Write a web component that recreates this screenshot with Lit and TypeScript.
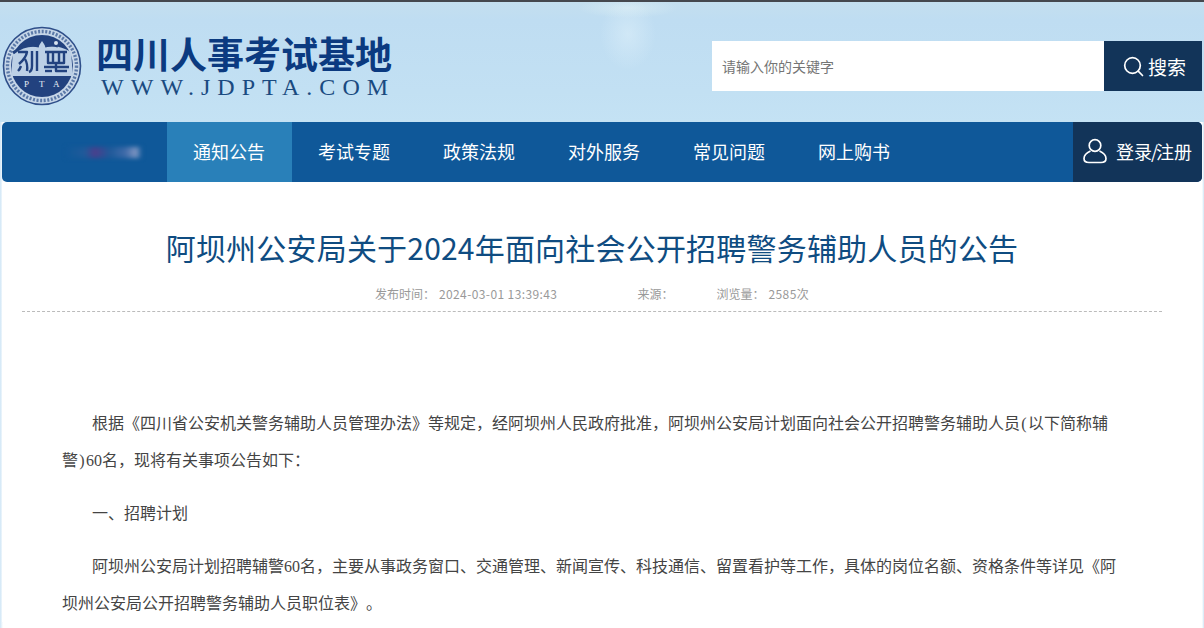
import { LitElement, html, css } from "lit";
import { customElement } from "lit/decorators.js";

const NAV = ["通知公告", "考试专题", "政策法规", "对外服务", "常见问题", "网上购书"];

@customElement("app-root")
export class AppRoot extends LitElement {
  static styles = css`
    :host {
      display: block;
      height: 628px;
      overflow: hidden;
      box-sizing: border-box;
      border-top: 2px solid #45484e;
      background: linear-gradient(90deg, #cfe6f6 0, #ffffff 3px, #ffffff 1202px, #cfe6f6 1204px);
      font-family: "Noto Sans CJK SC", "Liberation Sans", sans-serif;
      text-spacing-trim: space-all;
    }
    .head {
      height: 120px;
      display: flex;
      align-items: center;
      justify-content: space-between;
      padding: 0 2px;
      background:
        radial-gradient(ellipse 28px 36px at 628px 32px, rgba(222, 240, 250, .55), rgba(222, 240, 250, 0)),
        radial-gradient(ellipse 50px 10px at 628px 6px, rgba(222, 240, 245, .6), rgba(222, 240, 245, 0)),
        linear-gradient(180deg, #c4dfef 0%, #bfddf2 15%, #c2e0f3 75%, #c4e2f4 100%);
    }
    .brand { display: flex; align-items: center; gap: 14px; margin-top: 8px; }
    .logo { width: 80px; height: 80px; display: block; flex: none; }
    .brand-text { display: flex; flex-direction: column; margin-top: -2px; }
    .site-name {
      font-size: 37px;
      line-height: 43px;
      font-weight: 700;
      color: #0b3a80;
      white-space: nowrap;
    }
    .site-url {
      font-family: "Liberation Serif", serif;
      font-size: 24px;
      line-height: 24px;
      letter-spacing: 7.05px;
      color: #1a4a80;
      margin-left: 5px;
      white-space: nowrap;
    }
    .search { display: flex; height: 50px; margin-top: 8px; }
    .search-input {
      width: 392px;
      box-sizing: border-box;
      background: #fff;
      padding-left: 10px;
      display: flex;
      align-items: center;
      font-size: 14px;
      color: #757575;
    }
    .search-btn {
      width: 98px;
      box-sizing: border-box;
      padding-left: 19px;
      background: #123459;
      color: #fff;
      display: flex;
      align-items: center;
      gap: 4px;
      font-size: 19px;
    }
    .search-btn svg { width: 21px; height: 21px; display: block; }
    .nav {
      margin: 0 2px;
      height: 60px;
      display: flex;
      border-radius: 5px;
      overflow: hidden;
      background: #0f5899;
      color: #fff;
      font-size: 18px;
    }
    .nav-logo {
      width: 165px;
      display: flex;
      align-items: center;
      padding-left: 64px;
      box-sizing: border-box;
    }
    .smudge {
      width: 76px;
      height: 11px;
      filter: blur(2px);
      background: linear-gradient(90deg, #0f5899 0, #205a9a 25%, #4a3f8c 38%, #1f5a9a 58%, #3f6aa8 78%, #7f96c2 92%, #0f5899 100%);
    }
    .nav-item {
      width: 125px;
      display: flex;
      align-items: center;
      padding: 0 0 2px 26px;
      box-sizing: border-box;
      white-space: nowrap;
    }
    .nav-item.on { background: #2980b9; }
    .login {
      margin-left: auto;
      width: 129px;
      box-sizing: border-box;
      background: #123459;
      display: flex;
      align-items: center;
      gap: 9px;
      padding: 0 0 2px 10px;
      white-space: nowrap;
    }
    .login svg { width: 24px; height: 26px; display: block; flex: none; }
    .slash { letter-spacing: -2px; margin-left: -1px; }
    .article { margin: 0 2px; padding: 0 40px 0 20px; background: #fff; }
    .title {
      margin: 0;
      padding-top: 45px;
      font-size: 30px;
      line-height: 40px;
      letter-spacing: .2px;
      font-weight: 400;
      color: #0f4c81;
      text-align: center;
      white-space: nowrap;
    }
    .meta {
      margin-top: 16px;
      height: 20px;
      padding-bottom: 8px;
      border-bottom: 1px dashed #bbb;
      display: flex;
      justify-content: center;
      align-items: center;
      font-size: 12px;
      color: #999;
    }
    .meta span { white-space: nowrap; }
    .num { letter-spacing: .4px; margin-left: 4px; }
    .source { margin-left: 80px; width: 79px; }
    .body { padding: 93px 42px 0 40px; font-family: "Liberation Serif", "Noto Sans CJK SC", serif; font-size: 16px; color: #444; }
    .body p { margin: 0 0 16px; line-height: 37px; text-indent: 30px; }
    .ascii { display: inline-block; width: 8px; text-indent: 0; text-align: center; }
  `;

  render() {
    return html`
      <header class="head">
        <div class="brand">
          <svg class="logo" viewBox="0 0 80 80" aria-label="PTA">
            <circle cx="40" cy="40" r="38.5" fill="#c6d6e8" stroke="#2f4f8a" stroke-width="1.6"/>
            <circle cx="40" cy="40" r="34.5" fill="none" stroke="#5b79a8" stroke-width="3.4" stroke-dasharray="2 1.6"/>
            <circle cx="40" cy="40" r="31" fill="#22427f"/>
            <path d="M11 26 Q24 18 36 21 L40 15 L44 21 Q56 18 69 26 L71 50 L9 50 Z" fill="#bcd0e6"/>
            <path d="M11 27 Q24 17 37 20 M43 20 Q50 18 56 20" fill="none" stroke="#22427f" stroke-width="3"/>
            <circle cx="54" cy="17" r="2" fill="#d6e2ef"/>
            <g fill="none" stroke="#22427f" stroke-width="2.4" stroke-linejoin="round" transform="translate(1 -7)">
              <path d="M15 33 H24 Q23 39 16 45 M18 47 Q17 50 15 52"/>
              <path d="M22 40 Q25 45 24 52 M29 32 V47 Q29 52 26 53 M34 32 V52"/>
              <path d="M42 33 H64 M45 33 V44 H61 V33 M50 33 V44 M56 33 V44 M41 48 H66 M53 44 V52 H64"/>
              <path d="M42 52 H49"/>
            </g>
            <text x="22" y="61" font-family="Liberation Serif, serif" font-size="9" fill="#e6eef6">P</text>
            <text x="37" y="61" font-family="Liberation Serif, serif" font-size="9" fill="#e6eef6">T</text>
            <text x="51" y="61" font-family="Liberation Serif, serif" font-size="9" fill="#e6eef6">A</text>
          </svg>
          <div class="brand-text">
            <div class="site-name">四川人事考试基地</div>
            <div class="site-url">WWW.JDPTA.COM</div>
          </div>
        </div>
        <div class="search">
          <div class="search-input">请输入你的关键字</div>
          <div class="search-btn">
            <svg viewBox="0 0 21 21" fill="none" stroke="#fff" stroke-width="1.7" stroke-linecap="round">
              <circle cx="9.5" cy="9.5" r="7.8"/>
              <path d="M15.2 15.2 L19.5 19.5"/>
            </svg>
            <span>搜索</span>
          </div>
        </div>
      </header>
      <nav class="nav">
        <div class="nav-logo"><div class="smudge"></div></div>
        ${NAV.map((t, i) => html`<div class="nav-item ${i === 0 ? "on" : ""}">${t}</div>`)}
        <div class="login">
          <svg viewBox="0 0 24 26" fill="none" stroke="#fff" stroke-width="1.7">
            <circle cx="12" cy="7.5" r="5.8"/>
            <path d="M7.5 13 Q1 16 1 20.5 Q1 24.5 6 24.5 H18 Q23 24.5 23 20.5 Q23 16 16.5 13"/>
          </svg>
          <span>登录<span class="slash">/</span>注册</span>
        </div>
      </nav>
      <main class="article">
        <h1 class="title">阿坝州公安局关于2024年面向社会公开招聘警务辅助人员的公告</h1>
        <div class="meta">
          <span>发布时间&#xFF1A;</span><span class="num">2024-03-01 13:39:43</span>
          <span class="source">来源&#xFF1A;</span>
          <span>浏览量&#xFF1A;</span><span class="num">2585次</span>
        </div>
        <div class="body">
          <p>根据《四川省公安机关警务辅助人员管理办法》等规定&#xFF0C;经阿坝州人民政府批准&#xFF0C;阿坝州公安局计划面向社会公开招聘警务辅助人员<span class="ascii">(</span>以下简称辅警<span class="ascii">)</span>60名&#xFF0C;现将有关事项公告如下&#xFF1A;</p>
          <p>一、招聘计划</p>
          <p>阿坝州公安局计划招聘辅警60名&#xFF0C;主要从事政务窗口、交通管理、新闻宣传、科技通信、留置看护等工作&#xFF0C;具体的岗位名额、资格条件等详见《阿坝州公安局公开招聘警务辅助人员职位表》。</p>
        </div>
      </main>
    `;
  }
}
